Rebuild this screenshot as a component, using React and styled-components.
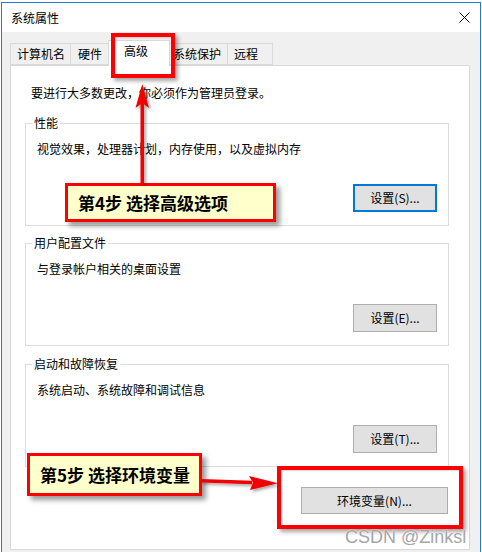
import styled, { createGlobalStyle } from "styled-components";

const GlobalStyle = createGlobalStyle`
  html, body {
    margin: 0;
    padding: 0;
    background: #ffffff;
    overflow: hidden;
  }
  body {
    font-family: "Noto Sans CJK SC", "Noto Sans", sans-serif;
    font-size: 12px;
    color: #000;
  }
`;

const Stage = styled.div`
  position: relative;
  width: 482px;
  height: 552px;
  overflow: hidden;
`;

const Window = styled.div`
  margin: 2px 0 0 1px;
  width: 480px;
  height: 560px;
  box-sizing: border-box;
  border: 1px solid #2b78d0;
  background: #f0f0f0;
  display: flex;
  flex-direction: column;
`;

const TitleBar = styled.div`
  height: 29px;
  background: #ffffff;
  display: flex;
  align-items: center;
  justify-content: space-between;
  padding: 0 10px 0 9px;
  font-size: 12px;
  line-height: 16px;
`;

const CloseIcon = () => (
  <svg width="11" height="11" viewBox="0 0 11 11">
    <path d="M0.5 0.5 L10.5 10.5 M10.5 0.5 L0.5 10.5" stroke="#000" strokeWidth="1" />
  </svg>
);

const Body = styled.div`
  padding: 11px 10px 0 8px;
  display: flex;
  flex-direction: column;
`;

const TabStrip = styled.div`
  display: flex;
  align-items: flex-end;
  height: 22px;
  position: relative;
  z-index: 1;
`;

const Tab = styled.div`
  box-sizing: border-box;
  width: ${(p) => p.$w}px;
  height: ${(p) => (p.$active ? 26 : 22)}px;
  margin: ${(p) => (p.$active ? "0 -2px -1px -2px" : "0 -1px 0 0")};
  border: 1px solid #d9d9d9;
  border-bottom: ${(p) => (p.$active ? "none" : "1px solid #d9d9d9")};
  background: ${(p) => (p.$active ? "#ffffff" : "#f0f0f0")};
  display: flex;
  align-items: ${(p) => (p.$active ? "flex-start" : "center")};
  padding: ${(p) => (p.$active ? "2px 0 0 15px" : `0 0 0 ${p.$pad}px`)};
  line-height: 16px;
  position: relative;
  z-index: ${(p) => (p.$active ? 2 : 1)};
`;

const Panel = styled.div`
  box-sizing: border-box;
  width: 460px;
  height: 485px;
  background: #ffffff;
  border: 1px solid #d9d9d9;
  display: flex;
  flex-direction: column;
  padding: 19px 0 0 14px;
`;

const Note = styled.div`
  line-height: 16px;
  margin-left: 6px;
`;

const Group = styled.div`
  box-sizing: border-box;
  width: 424px;
  height: 103px;
  margin-top: ${(p) => p.$top}px;
  border: 1px solid #dcdcdc;
  display: flex;
  flex-direction: column;
`;

const Legend = styled.div`
  align-self: flex-start;
  margin: -9px 0 0 6px;
  padding: 0 2px;
  background: #ffffff;
  line-height: 16px;
`;

const Desc = styled.div`
  margin: 10px 0 0 11px;
  line-height: 16px;
`;

const ButtonRow = styled.div`
  display: flex;
  justify-content: flex-end;
  margin: ${(p) => p.$margin};
`;

const Button = styled.button`
  box-sizing: border-box;
  width: ${(p) => p.$w}px;
  height: ${(p) => p.$h}px;
  background: #e1e1e1;
  border: ${(p) => (p.$focus ? "2px solid #0078d7" : "1px solid #adadad")};
  font-family: "Noto Sans CJK SC", "Noto Sans", sans-serif;
  font-size: 12px;
  line-height: 16px;
  color: #000;
  padding: 0;
  margin: 0;
`;

const RedFrame = styled.div`
  position: absolute;
  box-sizing: border-box;
  left: ${(p) => p.$x}px;
  top: ${(p) => p.$y}px;
  width: ${(p) => p.$w}px;
  height: ${(p) => p.$h}px;
  border: 4px solid #ff0000;
  box-shadow: 3px 3px 4px rgba(0, 0, 0, 0.35), inset 1px 1px 2px rgba(0, 0, 0, 0.15);
  z-index: 5;
`;

const Callout = styled.div`
  position: absolute;
  box-sizing: border-box;
  left: ${(p) => p.$x}px;
  top: ${(p) => p.$y}px;
  width: ${(p) => p.$w}px;
  height: ${(p) => p.$h}px;
  border: 3px solid #ff0000;
  background: #ffffcc;
  box-shadow: 4px 4px 5px rgba(0, 0, 0, 0.4);
  display: flex;
  align-items: center;
  padding-left: ${(p) => p.$pad}px;
  font-family: "Noto Sans CJK SC", sans-serif;
  font-weight: 700;
  font-size: 17px;
  white-space: nowrap;
  z-index: 6;
`;

const Arrows = styled.svg`
  position: absolute;
  left: 0;
  top: 0;
  z-index: 7;
  pointer-events: none;
`;

const Watermark = styled.div`
  position: absolute;
  left: 345px;
  top: 527px;
  font-family: "Liberation Sans", Arial, sans-serif;
  font-size: 18px;
  line-height: 21px;
  color: #a6a6a6;
  text-shadow: 0 0 1px #ffffff, 0 0 1px #ffffff;
  z-index: 8;
  white-space: nowrap;
`;

const tabs = [
  { label: "计算机名", w: 61, pad: 6 },
  { label: "硬件", w: 41, pad: 7 },
  { label: "高级", w: 62, active: true },
  { label: "系统保护", w: 60, pad: 4 },
  { label: "远程", w: 46, pad: 6 },
];

const groups = [
  { title: "性能", desc: "视觉效果，处理器计划，内存使用，以及虚拟内存", btn: "设置(S)...", focus: true, top: 22 },
  { title: "用户配置文件", desc: "与登录帐户相关的桌面设置", btn: "设置(E)...", top: 17 },
  { title: "启动和故障恢复", desc: "系统启动、系统故障和调试信息", btn: "设置(T)...", top: 18 },
];

export default function App() {
  return (
    <Stage>
      <GlobalStyle />
      <Window>
        <TitleBar>
          <span>系统属性</span>
          <CloseIcon />
        </TitleBar>
        <Body>
          <TabStrip>
            {tabs.map((t) => (
              <Tab key={t.label} $w={t.w} $pad={t.pad} $active={t.active}>
                {t.label}
              </Tab>
            ))}
          </TabStrip>
          <Panel>
            <Note>要进行大多数更改，你必须作为管理员登录。</Note>
            {groups.map((g) => (
              <Group key={g.title} $top={g.top}>
                <Legend>{g.title}</Legend>
                <Desc>{g.desc}</Desc>
                <ButtonRow $margin="27px 11px 0 0">
                  <Button $w={84} $h={28} $focus={g.focus}>
                    {g.btn}
                  </Button>
                </ButtonRow>
              </Group>
            ))}
            <ButtonRow $margin="20px 0 0 0" style={{ width: 423 }}>
              <Button $w={147} $h={27}>环境变量(N)...</Button>
            </ButtonRow>
          </Panel>
        </Body>
      </Window>

      <RedFrame $x={111} $y={33} $w={64} $h={45} />
      <RedFrame $x={277} $y={466} $w={186} $h={63} />

      <Callout $x={65} $y={183} $w={211} $h={39} $pad={10}>
        第4步 选择高级选项
      </Callout>
      <Callout $x={27} $y={453} $w={175} $h={43} $pad={10}>
        第5步 选择环境变量
      </Callout>

      <Arrows width="482" height="552" viewBox="0 0 482 552">
        <defs>
          <filter id="sh" x="-50%" y="-50%" width="200%" height="200%">
            <feDropShadow dx="2" dy="2" stdDeviation="1.5" floodColor="#000" floodOpacity="0.35" />
          </filter>
        </defs>
        <g filter="url(#sh)" fill="#f00000">
          <rect x="140.5" y="100" width="3.5" height="83" />
          <path d="M142.3 84 L149 108 L142.3 103 L135.5 108 Z" />
          <path d="M201 479 L252 480.8 L252 484.2 L201 482.4 Z" />
          <path d="M278 483.3 L249 476 L253 482.6 L250 490 Z" />
        </g>
      </Arrows>

      <Watermark>CSDN @Zinksl</Watermark>
    </Stage>
  );
}
